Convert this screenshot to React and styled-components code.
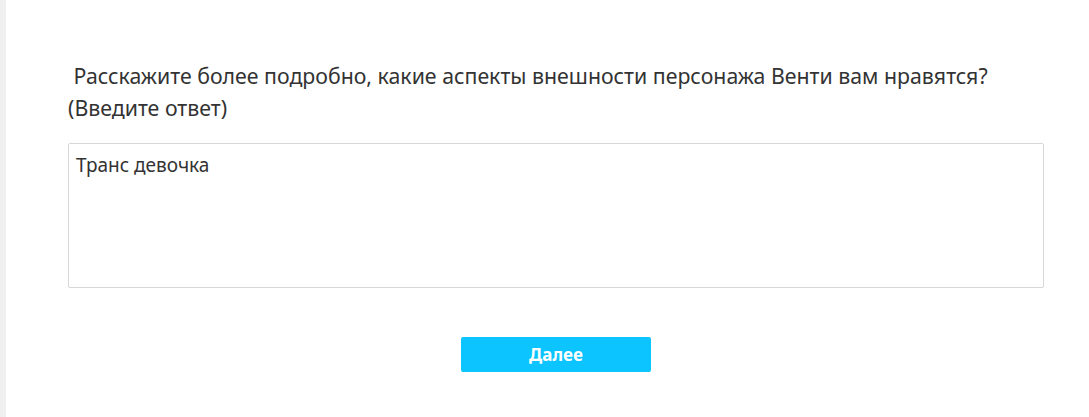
import React from "react";
import styled, { createGlobalStyle } from "styled-components";

const GlobalStyle = createGlobalStyle`
    body {
        margin: 0;
        background: #ffffff;
        font-family: "Noto Sans", "Open Sans", sans-serif;
    }
`

const Page = styled.div`
    min-height: 417px;
    border-left: 6px solid #f0f0f0;
    box-sizing: border-box;
    padding: 60px 46px 0 62px;
`
const Question = styled.div`
    font-size: 21.3px;
    line-height: 32px;
    color: #333333;
    white-space: pre-wrap;
`
const Answer = styled.textarea`
    display: block;
    box-sizing: border-box;
    width: 976px;
    height: 145px;
    margin-top: 19px;
    padding: 8px 7px;
    border: 1px solid #d7d7d7;
    border-radius: 2px;
    font-family: "Noto Sans", "Open Sans", sans-serif;
    font-size: 19px;
    line-height: 26px;
    color: #333333;
    resize: none;
    outline: none;
`
const Footer = styled.div`
    width: 976px;
    display: flex;
    justify-content: center;
    margin-top: 49px;
`
const NextButton = styled.button`
    width: 190px;
    height: 35px;
    border: none;
    border-radius: 2px;
    background: #0cc4ff;
    color: #ffffff;
    font-family: "Noto Sans", "Open Sans", sans-serif;
    font-size: 17px;
    font-weight: 700;
    cursor: pointer;
`

const App = () => {
    return (
        <>
            <GlobalStyle />
            <Page>
                <Question>{" Расскажите более подробно, какие аспекты внешности персонажа Венти вам нравятся?\n(Введите ответ)"}</Question>
                <Answer defaultValue="Транс девочка" />
                <Footer>
                    <NextButton>Далее</NextButton>
                </Footer>
            </Page>
        </>
    )
}

export default App
